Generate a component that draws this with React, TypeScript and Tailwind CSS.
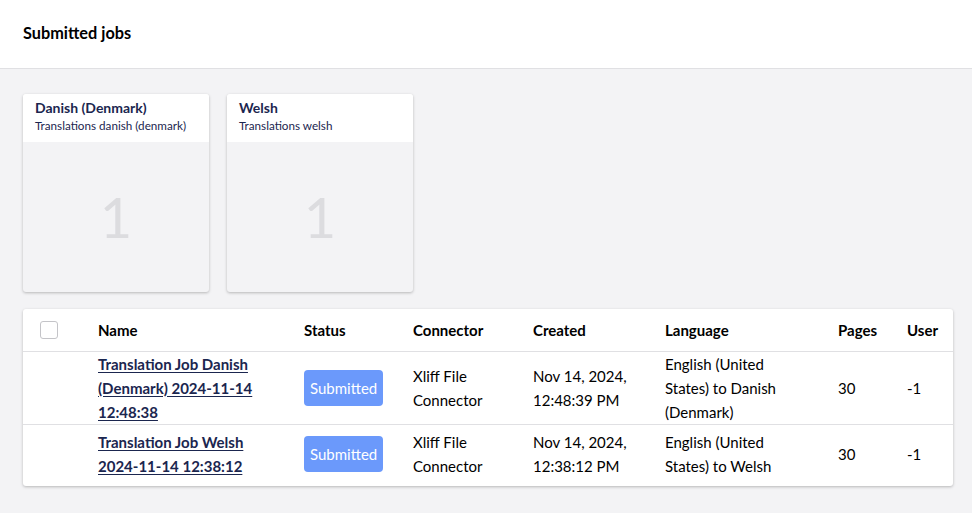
import React from 'react'

const languages = [
	{ name: 'Danish (Denmark)', description: 'Translations danish (denmark)', count: 1 },
	{ name: 'Welsh', description: 'Translations welsh', count: 1 },
]

const jobs = [
	{
		name: 'Translation Job Danish (Denmark) 2024-11-14 12:48:38',
		status: 'Submitted',
		connector: 'Xliff File Connector',
		created: 'Nov 14, 2024, 12:48:39 PM',
		language: 'English (United States) to Danish (Denmark)',
		pages: 30,
		user: -1,
	},
	{
		name: 'Translation Job Welsh 2024-11-14 12:38:12',
		status: 'Submitted',
		connector: 'Xliff File Connector',
		created: 'Nov 14, 2024, 12:38:12 PM',
		language: 'English (United States) to Welsh',
		pages: 30,
		user: -1,
	},
]

function LanguageCard({ language }: { language: (typeof languages)[0] }) {
	return (
		<div className="w-[186px] h-[198px] flex flex-col bg-[#f3f3f5] rounded-[3px] shadow-[0_1px_3px_rgba(0,0,0,0.25)] overflow-hidden">
			<div className="bg-white h-[48px] px-3 pt-[5px]">
				<p className="text-[14px] font-bold leading-[18px] text-[#1b264f]">{language.name}</p>
				<p className="text-[11.7px] leading-[16px] text-[#1b264f]">{language.description}</p>
			</div>
			<div className="flex-1 flex items-center justify-center">
				<span className="text-[56px] leading-none text-[#dcdcdf]">{language.count}</span>
			</div>
		</div>
	)
}

export default function App() {
	return (
		<div className="min-h-screen bg-[#f3f3f5] font-['Lato',sans-serif] text-black">
			{/* Header */}
			<header className="h-[69px] bg-white border-b border-[#e0e0e3] flex items-center px-[23px] pb-[1px]">
				<h1 className="text-[16.3px] font-bold text-black">Submitted jobs</h1>
			</header>

			<div className="px-[23px] pt-[25px]">
				{/* Language cards */}
				<div className="flex gap-[18px]">
					{languages.map((language) => (
						<LanguageCard key={language.name} language={language} />
					))}
				</div>

				{/* Jobs table */}
				<div className="mt-[17px] w-[930px] pb-[2px] bg-white rounded-[3px] shadow-[0_1px_3px_rgba(0,0,0,0.25)]">
					<table className="w-full border-collapse text-[15px] leading-[24px] table-fixed">
						<colgroup>
							<col className="w-[75px]" />
							<col className="w-[206px]" />
							<col className="w-[109px]" />
							<col className="w-[120px]" />
							<col className="w-[132px]" />
							<col className="w-[173px]" />
							<col className="w-[69px]" />
							<col />
						</colgroup>
						<thead>
							<tr className="h-[42px] border-b border-[#e0e0e3] text-left">
								<th className="pl-[17px] align-middle">
									<span className="block w-[18px] h-[18px] border border-[#c4c4c8] rounded-[3px]" />
								</th>
								<th className="font-bold">Name</th>
								<th className="font-bold">Status</th>
								<th className="font-bold">Connector</th>
								<th className="font-bold">Created</th>
								<th className="font-bold">Language</th>
								<th className="font-bold">Pages</th>
								<th className="font-bold">User</th>
							</tr>
						</thead>
						<tbody>
							{jobs.map((job, i) => (
								<tr
									key={job.name}
									className={`h-[60px] ${i < jobs.length - 1 ? 'border-b border-[#e0e0e3]' : ''}`}
								>
									<td />
									<td className="pr-10 align-middle">
										<a href="#" className="font-bold text-[#1b264f] underline underline-offset-2">
											{job.name}
										</a>
									</td>
									<td className="align-middle">
										<span className="inline-flex items-center h-[36px] px-[6px] rounded-[4px] bg-[#6b99fb] text-white">
											{job.status}
										</span>
									</td>
									<td className="pr-10 align-middle">{job.connector}</td>
									<td className="pr-5 align-middle">{job.created}</td>
									<td className="pr-10 align-middle">{job.language}</td>
									<td className="align-middle">{job.pages}</td>
									<td className="align-middle">{job.user}</td>
								</tr>
							))}
						</tbody>
					</table>
				</div>
			</div>
		</div>
	)
}
